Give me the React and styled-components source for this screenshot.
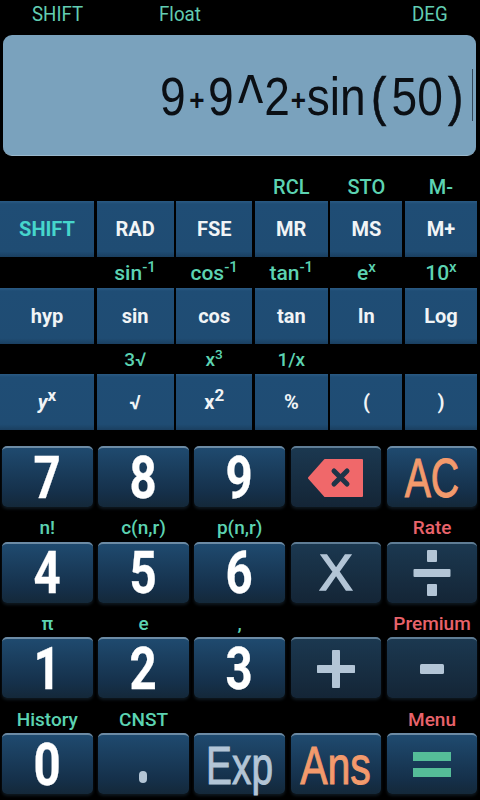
import React from 'react'
import styled, { createGlobalStyle } from 'styled-components'

const GlobalStyle = createGlobalStyle`
  html, body { margin:0; padding:0; background:#000; }
  #root { width:480px; height:800px; overflow:hidden; }
`
const Page = styled.div`
  width:480px;
  height:800px;
  background:#000;
  font-family:Roboto, "Liberation Sans", sans-serif;
  display:flex;
  flex-direction:column;
`
const StatusBar = styled.div`
  height:35px;
  display:grid;
  grid-template-columns:127px 253px 1fr;
  padding:0 0 7px 32px;
  box-sizing:border-box;
  align-items:center;
  color:#62cdb2;
  font-size:21px;
  line-height:28px;
  & > span { display:inline-block; transform:scaleX(.89); transform-origin:left center; }
`
const Display = styled.div`
  width:473px;
  height:121px;
  margin:0 0 19px 3px;
  border-radius:9px;
  background:#7aa2bd;
  border-bottom:1px solid #9ab8cc;
  box-sizing:border-box;
  display:flex;
  justify-content:flex-end;
  align-items:center;
  padding-right:3px;
  font-family:"Liberation Sans", Arial, sans-serif;
  color:#0b0f14;
`
const Expr = styled.div`
  font-size:53px;
  line-height:60px;
  white-space:nowrap;
  display:flex;
  align-items:center;
  margin:4px 3px 0 0;
  transform:scaleX(.87);
  transform-origin:right center;
`
const Plus = styled.span`
  font-size:30px;
  font-weight:700;
  margin:5px ${({$wide})=>$wide ? 4 : 1}px 0;
`
const Caret = styled.span`
  display:inline-block;
  font-size:62px;
  margin:0 1px 0 5px;
  transform:translateY(-2px) scaleY(1.25);
  transform-origin:center top;
`
const Paren = styled.span`
  margin:0 6px;
  -webkit-text-stroke:.6px currentColor;
`
const Cursor = styled.div`
  width:1px;
  height:52px;
  background:#33485a;
`
const SciRow = styled.div`
  display:grid;
  grid-template-columns:94px 77px 76px 73px 72px 72px;
  column-gap:2.6px;
  height:${({$h})=>$h}px;
  align-items:center;
  text-align:center;
`
const SciLabel = styled.div`
  color:#5cd3b2;
  font-size:${({$size})=>$size}px;
  font-weight:500;
  line-height:24px;
  white-space:nowrap;
  transform:translateY(${({$dy})=>$dy}px);
  sup { font-size:.72em; line-height:0; vertical-align:baseline; position:relative; top:-.5em; }
`
const SciKey = styled.div`
  height:56px;
  background:linear-gradient(#2a5a83 0, #1f4d75 3px, #1f4c73 90%, #1a3f60 100%);
  color:${({$accent})=>$accent ? '#46d6cc' : '#f1f4f6'};
  font-size:20px;
  font-weight:700;
  display:flex;
  align-items:center;
  justify-content:center;
  sup { font-size:.85em; line-height:0; vertical-align:baseline; position:relative; top:-.42em; }
`
const NumPad = styled.div`
  display:flex;
  flex-direction:column;
  margin-top:16px;
  padding:0 3px 0 2px;
`
const LabelRow = styled.div`
  display:grid;
  grid-template-columns:repeat(5, 90.6px);
  column-gap:5.6px;
  height:34.7px;
  align-items:center;
  text-align:center;
`
const PadLabel = styled.div`
  color:${({$red})=>$red ? '#e8636b' : '#5cd3b2'};
  font-size:19px;
  font-weight:500;
  line-height:22px;
  white-space:nowrap;
  padding-top:8px;
`
const KeyRow = styled.div`
  display:grid;
  grid-template-columns:repeat(5, 90.6px);
  column-gap:5.6px;
`
const Key = styled.div`
  height:61px;
  border-radius:5px;
  box-sizing:border-box;
  border-top:2px solid ${({$dark})=>$dark ? '#5f7d95' : '#6c8ba5'};
  background:${({$dark})=>$dark
    ? 'linear-gradient(#1b3850, #142536)'
    : 'linear-gradient(#1f4a6f, #15304a 75%, #142839)'};
  box-shadow:0 2px 3px rgba(70,110,140,.22);
  display:flex;
  align-items:center;
  justify-content:center;
`
const Digit = styled.span`
  display:inline-block;
  color:#fff;
  font-weight:700;
  font-size:60px;
  line-height:44px;
  -webkit-text-stroke:.3px currentColor;
  transform:scaleX(.79);
`
const Word = styled.span`
  display:inline-block;
  color:${({$color})=>$color};
  font-family:"Liberation Sans", Arial, sans-serif;
  font-size:${({$size})=>$size}px;
  line-height:44px;
  -webkit-text-stroke:${({$stroke})=>$stroke}px currentColor;
  transform:scaleX(${({$sx})=>$sx});
`

const sciRows = [
  {
    labelH: 26, size: 20, dy: -1,
    labels: [null, null, null, 'RCL', 'STO', 'M-'],
    keys: ['SHIFT', 'RAD', 'FSE', 'MR', 'MS', 'M+'],
  },
  {
    labelH: 31, size: 21, dy: 0,
    labels: [null, <>sin<sup>-1</sup></>, <>cos<sup>-1</sup></>, <>tan<sup>-1</sup></>, <>e<sup>x</sup></>, <>10<sup>x</sup></>],
    keys: ['hyp', 'sin', 'cos', 'tan', 'ln', 'Log'],
  },
  {
    labelH: 30, size: 19, dy: 1,
    labels: [null, '3√', <>x<sup>3</sup></>, '1/x', null, null],
    keys: [<><i>y</i><sup>x</sup></>, '√', <>x<sup>2</sup></>, '%', '(', ')'],
  },
]

const Backspace = () => (
  <svg width="56" height="40" viewBox="0 0 56 40">
    <path d="M1 20 L17 2 H54 V38 H17 Z" fill="#f0686a" stroke="#f0686a" strokeWidth="2" strokeLinejoin="round" />
    <path d="M26 13 L39 26 M39 13 L26 26" stroke="#1d3448" strokeWidth="5" strokeLinecap="round" />
  </svg>
)
const Divide = () => (
  <svg width="38" height="46" viewBox="0 0 38 46">
    <rect x="14" y="0" width="10" height="12" rx="1" fill="#b3c5d6" />
    <rect x="0.5" y="19" width="37" height="8" rx="1" fill="#b3c5d6" />
    <rect x="14" y="34" width="10" height="12" rx="1" fill="#b3c5d6" />
  </svg>
)
const PlusIcon = () => (
  <svg width="38" height="38" viewBox="0 0 38 38">
    <path d="M19 2 V36 M2 19 H36" stroke="#b3c5d6" strokeWidth="8" strokeLinecap="round" />
  </svg>
)
const Minus = () => (
  <svg width="26" height="12" viewBox="0 0 26 12">
    <rect x="1" y="1" width="24" height="10" rx="1.5" fill="#b3c5d6" />
  </svg>
)
const Equals = () => (
  <svg width="38" height="26" viewBox="0 0 38 26">
    <rect x="0" y="0" width="38" height="9" fill="#55bd98" />
    <rect x="0" y="16" width="38" height="9" fill="#55bd98" />
  </svg>
)
const Dot = () => (
  <svg width="10" height="36" viewBox="0 0 10 36">
    <rect x="1" y="24" width="8" height="12" rx="4" fill="#b3c5d6" />
  </svg>
)

const padRows = [
  {
    labels: [],
    keys: [<Digit>7</Digit>, <Digit>8</Digit>, <Digit>9</Digit>, <Backspace />, <Word $color="#f39a6c" $size={56} $sx={.7} $stroke={1}>AC</Word>],
    dark: [false, false, false, true, false],
  },
  {
    labels: ['n!', 'c(n,r)', 'p(n,r)', null, 'Rate'],
    keys: [<Digit>4</Digit>, <Digit>5</Digit>, <Digit>6</Digit>, <Word $color="#b3c5d6" $size={50} $sx={1} $stroke={1.6}>X</Word>, <Divide />],
    dark: [false, false, false, true, true],
  },
  {
    labels: ['π', 'e', ',', null, 'Premium'],
    keys: [<Digit>1</Digit>, <Digit>2</Digit>, <Digit>3</Digit>, <PlusIcon />, <Minus />],
    dark: [false, false, false, true, true],
  },
  {
    labels: ['History', 'CNST', null, null, 'Menu'],
    keys: [<Digit>0</Digit>, <Dot />, <Word $color="#b3c5d6" $size={54} $sx={.72} $stroke={1}>Exp</Word>, <Word $color="#f39a6c" $size={54} $sx={.76} $stroke={1}>Ans</Word>, <Equals />],
    dark: [false, false, false, false, false],
  },
]

const App = () => {
  return (
    <Page>
      <GlobalStyle />
      <StatusBar>
        <span>SHIFT</span>
        <span>Float</span>
        <span>DEG</span>
      </StatusBar>
      <Display>
        <Expr>
          9<Plus $wide>+</Plus>9<Caret>^</Caret>2<Plus>+</Plus>sin<Paren>(</Paren>50<Paren>)</Paren>
        </Expr>
        <Cursor />
      </Display>
      {sciRows.map((row, r) => (
        <React.Fragment key={r}>
          <SciRow $h={row.labelH}>
            {row.labels.map((label, i) => <SciLabel key={i} $size={row.size} $dy={row.dy}>{label}</SciLabel>)}
          </SciRow>
          <SciRow $h={56}>
            {row.keys.map((key, i) => <SciKey key={i} $accent={r === 0 && i === 0}>{key}</SciKey>)}
          </SciRow>
        </React.Fragment>
      ))}
      <NumPad>
        {padRows.map((row, r) => (
          <React.Fragment key={r}>
            {r > 0 && (
              <LabelRow>
                {[0, 1, 2, 3, 4].map(i => <PadLabel key={i} $red={i === 4}>{row.labels[i]}</PadLabel>)}
              </LabelRow>
            )}
            <KeyRow>
              {row.keys.map((key, i) => <Key key={i} $dark={row.dark[i]}>{key}</Key>)}
            </KeyRow>
          </React.Fragment>
        ))}
      </NumPad>
    </Page>
  )
}

export default App
